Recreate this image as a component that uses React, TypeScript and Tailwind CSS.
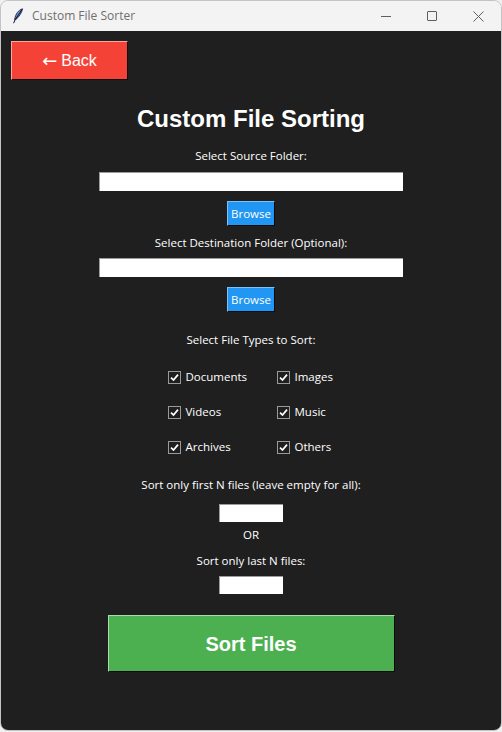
import { useState } from 'react';

const uiFont = { fontFamily: '"Open Sans", "Noto Sans", sans-serif' };
const arial = { fontFamily: '"Liberation Sans", Arial, sans-serif' };

function TitleBar() {
  return (
    <div className="flex h-[30px] items-center bg-[#f3f3f3] text-[#6f6f6f]">
      <svg width="12" height="16" viewBox="0 0 12 16" className="ml-[11px]">
        <path d="M10.5 0.8 C6.5 2 3.5 6 2.6 11.5 L4.2 11.2 C6.8 9 9.8 5 10.5 0.8 Z" fill="#6d8fd6" stroke="#1b2a4a" strokeWidth="0.9" />
        <path d="M10 1.5 L3 12 L1.6 15.2" fill="none" stroke="#111" strokeWidth="1" />
      </svg>
      <span className="ml-[8px] text-[12px]" style={uiFont}>
        Custom File Sorter
      </span>
      <div className="ml-auto flex items-center">
        <div className="flex h-[30px] w-[46px] items-center justify-center">
          <div className="h-px w-[10px] bg-[#5f5f5f]" />
        </div>
        <div className="flex h-[30px] w-[46px] items-center justify-center">
          <div className="h-[10px] w-[10px] rounded-[1px] border border-[#5f5f5f]" />
        </div>
        <div className="flex h-[30px] w-[46px] items-center justify-center">
          <svg width="11" height="11" viewBox="0 0 11 11">
            <path d="M0.5 0.5 L10.5 10.5 M10.5 0.5 L0.5 10.5" stroke="#5f5f5f" strokeWidth="1" />
          </svg>
        </div>
      </div>
    </div>
  );
}

function Label({ children, className = '' }: { children: React.ReactNode; className?: string }) {
  return (
    <div className={`text-[11.5px] leading-[16px] text-white ${className}`} style={uiFont}>
      {children}
    </div>
  );
}

function Entry({ className = '' }: { className?: string }) {
  return <div className={`border-t border-l border-[#9c9c9c] bg-white ${className}`} />;
}

function BrowseButton({ className = '' }: { className?: string }) {
  return (
    <button
      className={`flex h-[25px] w-[48px] items-center justify-center border border-t-[#7cc1f8] border-l-[#7cc1f8] border-b-[#0b0b0b] border-r-[#0b0b0b] bg-[#2196f3] text-[11.5px] text-white ${className}`}
      style={uiFont}
    >
      Browse
    </button>
  );
}

function Check({ label, checked, onToggle }: { label: string; checked: boolean; onToggle: () => void }) {
  return (
    <div className="flex h-[20px] cursor-default items-center" onClick={onToggle}>
      <div className="flex h-[13px] w-[13px] items-center justify-center border border-[#9a9a9a] bg-[#1f1f1f]">
        {checked && (
          <svg width="9" height="9" viewBox="0 0 9 9">
            <path d="M1 4.6 L3.5 7 L8 1.6" fill="none" stroke="#ffffff" strokeWidth="1.7" />
          </svg>
        )}
      </div>
      <span className="ml-[5px] text-[11.5px] text-white" style={uiFont}>
        {label}
      </span>
    </div>
  );
}

export default function App() {
  const [types, setTypes] = useState<Record<string, boolean>>({
    Documents: true,
    Images: true,
    Videos: true,
    Music: true,
    Archives: true,
    Others: true,
  });
  const toggle = (k: string) => setTypes((t) => ({ ...t, [k]: !t[k] }));
  const order = ['Documents', 'Images', 'Videos', 'Music', 'Archives', 'Others'];

  return (
    <div className="h-[732px] w-[502px] bg-[#f0f0f0]">
      <div className="flex h-[731px] w-[502px] flex-col overflow-hidden rounded-[8px] border border-[#c4c4c4]">
        <TitleBar />
        <div className="flex flex-1 flex-col items-center bg-[#1f1f1f]">
          <div className="mt-[10px] w-full pl-[10px]">
            <button
              className="flex h-[39px] w-[117px] items-center justify-center border border-t-[#f9a8a1] border-l-[#f9a8a1] border-b-[#0b0b0b] border-r-[#0b0b0b] bg-[#f44336] text-[16px] text-white"
              style={arial}
            >
              <span style={{ fontFamily: '"DejaVu Sans", sans-serif' }} className="text-[18px] leading-[18px]">
                ←
              </span>
              <span className="ml-[4px]">Back</span>
            </button>
          </div>

          <h1 className="mt-[25px] text-[24px] leading-[28px] font-bold text-white" style={arial}>
            Custom File Sorting
          </h1>

          <Label className="mt-[15px]">Select Source Folder:</Label>
          <Entry className="mt-[8px] h-[19px] w-[304px]" />
          <BrowseButton className="mt-[10px]" />

          <Label className="mt-[9px]">Select Destination Folder (Optional):</Label>
          <Entry className="mt-[7px] h-[19px] w-[304px]" />
          <BrowseButton className="mt-[10px]" />

          <Label className="mt-[20px]">Select File Types to Sort:</Label>
          <div className="mt-[19px] grid grid-cols-[109px_58px] gap-y-[15px]">
            {order.map((k) => (
              <Check key={k} label={k} checked={types[k]} onToggle={() => toggle(k)} />
            ))}
          </div>

          <Label className="mt-[20px]">Sort only first N files (leave empty for all):</Label>
          <Entry className="mt-[11px] h-[18px] w-[64px]" />
          <Label className="mt-[5px]">OR</Label>
          <Label className="mt-[10px]">Sort only last N files:</Label>
          <Entry className="mt-[7px] h-[18px] w-[64px]" />

          <button
            className="mt-[21px] flex h-[57px] w-[287px] items-center justify-center border border-t-[#a8dcaa] border-l-[#a8dcaa] border-b-[#0b0b0b] border-r-[#0b0b0b] bg-[#4caf50] text-[20px] font-bold text-white"
            style={arial}
          >
            Sort Files
          </button>
        </div>
      </div>
    </div>
  );
}
